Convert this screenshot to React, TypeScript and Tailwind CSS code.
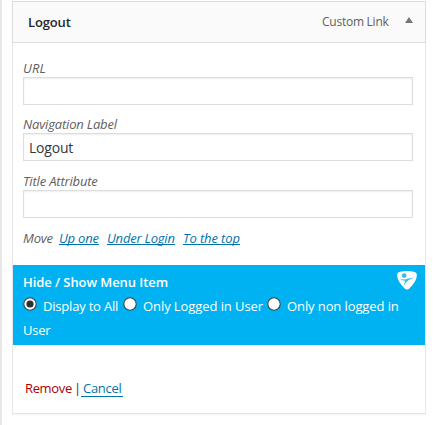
import type { ReactNode } from 'react';

function Field({ label, value, className, labelClass }: { label: string; value?: string; className: string; labelClass: string }) {
  return (
    <label className={`block ${className}`}>
      <span className={`block h-[18px] text-[13px] leading-[18px] italic text-[#606060] ${labelClass}`}>{label}</span>
      <input
        type="text"
        defaultValue={value}
        className="block h-7 w-[390px] border border-[#ddd] bg-white px-[5px] text-[14px] tracking-[-0.2px] text-[#32373c] shadow-[inset_0_1px_2px_rgba(0,0,0,0.07)] outline-none"
      />
    </label>
  );
}

function Radio({ checked }: { checked?: boolean }) {
  return (
    <svg viewBox="0 0 14 14" className="mt-[-4px] h-[14px] w-[14px] shrink-0" role="radio" aria-checked={!!checked}>
      <circle cx="7" cy="7" r="6.2" fill="#fff" stroke="#33434d" strokeWidth="1.1" />
      {checked && <circle cx="7" cy="7" r="3.6" fill="#2b3036" />}
    </svg>
  );
}

function MoveLink({ children, className }: { children: ReactNode; className: string }) {
  return (
    <a href="#" className={`h-[16px] shrink-0 border-b border-[#0073aa] leading-[18px] text-[#0073aa] ${className}`}>
      {children}
    </a>
  );
}

export default function App() {
  return (
    <div className="h-[425px] w-[435px] overflow-hidden whitespace-nowrap border-l-2 border-[#e8e8e8] bg-white pl-[10px] pt-px font-['Open_Sans','Noto_Sans',sans-serif] text-[13px]">
      <div className="flex h-[42px] w-[414px] items-center border border-[#ddd] bg-[#fafafa] pl-[15px] pr-[11px] shadow-[0_1px_1px_rgba(0,0,0,0.04)]">
        <span className="mt-px text-[13px] font-semibold tracking-[-0.15px] text-[#23282d]">Logout</span>
        <span className="ml-auto w-[68px] text-[12px] tracking-[-0.25px] text-[#606060]">Custom Link</span>
        <svg viewBox="0 0 8 6" className="ml-[15px] mr-px mt-[-4px] h-[6px] w-[8px]"><path d="M4 0 8 6H0Z" fill="#72777c" /></svg>
      </div>
      <div className="h-[371px] w-[414px] border border-t-0 border-[#e5e5e5] bg-white shadow-[0_1px_1px_rgba(0,0,0,0.04)]">
        <div className="px-[10px]">
          <Field label="URL" className="pt-4" labelClass="tracking-[0.1px]" />
          <Field label="Navigation Label" value="Logout" className="pt-[10px]" labelClass="tracking-[-0.16px]" />
          <Field label="Title Attribute" className="pt-[11px]" labelClass="tracking-[-0.17px]" />
          <div className="flex h-[47px] pt-[11px] text-[13px] italic leading-[18px] text-[#606060]">
            <span className="w-9 shrink-0 tracking-[-0.2px]">Move</span>
            <MoveLink className="mr-2 w-10 tracking-[-0.2px]">Up one</MoveLink>
            <MoveLink className="mr-2 w-[68px] tracking-[-0.2px]">Under Login</MoveLink>
            <MoveLink className="w-[57px] tracking-[-0.1px]">To the top</MoveLink>
          </div>
        </div>
        <div className="relative h-20 bg-[#00b2f1] px-[10px] pt-[5px] text-white">
          <svg viewBox="0 0 20 19" className="absolute right-2 top-[6px] h-[19px] w-5">
            <path d="M3.2.8Q10-.6 16.8.8 20 1.4 19.9 4.6 19.2 11 12.6 17.2 10 19.6 7.4 17.2.8 11 .1 4.6 0 1.4 3.2.8Z" fill="#fff" />
            <circle cx="7.2" cy="4.6" r="2.4" fill="#35bdf0" />
            <path d="M2.8 7.2Q5.2 8.6 8 8.4 12 7 17.6 6.6 11.5 8.4 8.8 11.8 8 13.2 7.3 14.4 7 12 8.1 9.8 4.8 9.7 2.8 7.2Z" fill="#35bdf0" />
          </svg>
          <div className="h-6 text-[13px] font-semibold leading-6 tracking-[-0.07px]">Hide / Show Menu Item</div>
          <div className="flex h-6 items-center leading-6">
            <Radio checked />
            <span className="ml-[6px] mr-[5px] w-[75px] shrink-0 tracking-[-0.2px]">Display to All</span>
            <Radio />
            <span className="ml-[6px] mr-[4px] w-[120px] shrink-0 tracking-[-0.08px]">Only Logged in User</span>
            <Radio />
            <span className="ml-[6px] tracking-[-0.1px]">Only non logged in</span>
          </div>
          <div className="h-6 leading-6 tracking-[-0.2px]">User</div>
        </div>
        <div className="flex pl-3 pt-[34px] text-[13px] leading-[18px]">
          <a href="#" className="w-[49px] tracking-[-0.35px] text-[#a00]">Remove</a>
          <span className="w-[7px] text-[#333]">|</span>
          <a href="#" className="h-[18px] w-[42px] border-b border-[#0073aa] pl-[2px] leading-[18px] tracking-[-0.3px] text-[#0073aa]">Cancel</a>
        </div>
      </div>
    </div>
  );
}
